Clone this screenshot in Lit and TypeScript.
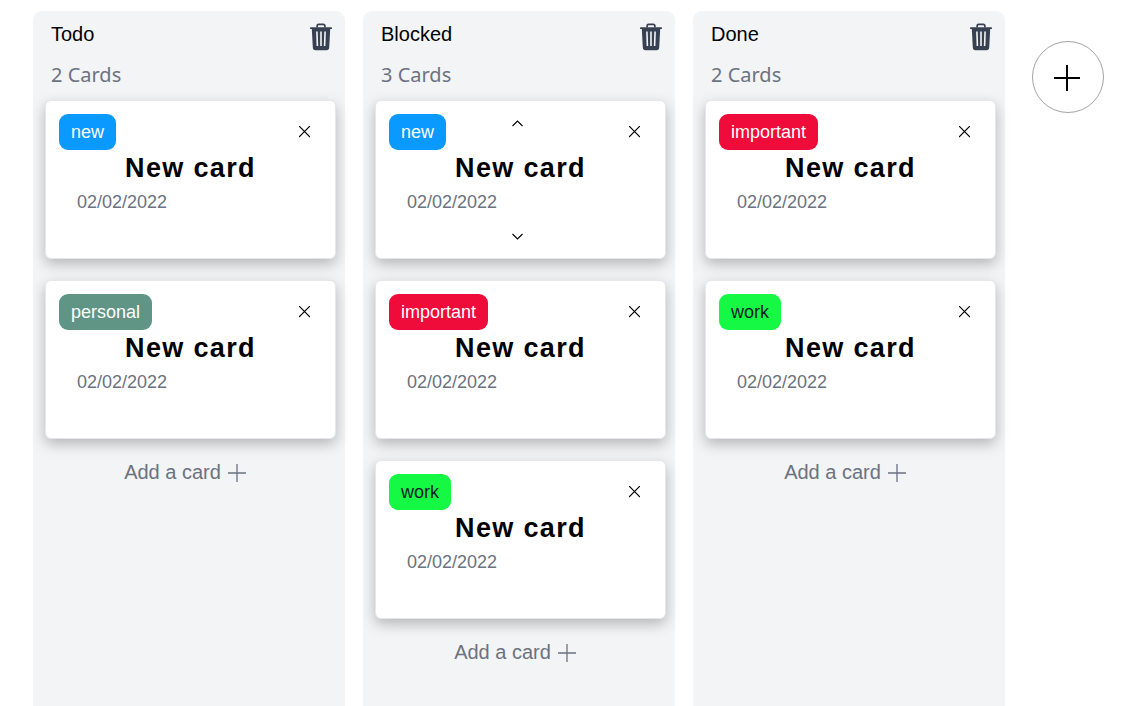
import { LitElement, html, css, svg, nothing } from "lit";
import { customElement, property, state } from "lit/decorators.js";
import { classMap } from "lit/directives/class-map.js";

type Tag = "new" | "personal" | "important" | "work";

interface Card {
  tag: Tag;
  title: string;
  date: string;
  movable?: boolean;
}

interface Column {
  name: string;
  cards: Card[];
}

const reset = css`
  *,
  *::before,
  *::after {
    box-sizing: border-box;
  }
  button {
    display: flex;
    align-items: center;
    justify-content: center;
    margin: 0;
    padding: 0;
    border: 0;
    background: none;
    color: inherit;
    font: inherit;
    cursor: pointer;
  }
  svg {
    display: block;
    flex: none;
    fill: none;
    stroke: currentColor;
  }
  h2,
  h3,
  p {
    margin: 0;
  }
`;

const trashIcon = html`<svg width="22" height="28" viewBox="0 0 22 28" aria-hidden="true">
  <path
    d="M7.100 4.600V2.900a1.500 1.500 0 0 1 1.500-1.500h4.800a1.500 1.500 0 0 1 1.500 1.500v1.700"
    stroke-width="1.700"
  />
  <path
    d="M.6 4.300h20.800c.4 0 .6.3.6.6v.6c0 .4-.3.6-.6.6h-1.200l-1 18.500a2.700 2.700 0 0 1-2.700 2.600H5.500a2.700 2.700 0 0 1-2.700-2.600L1.800 6.100H.6a.6.6 0 0 1-.6-.6v-.6c0-.4.3-.6.6-.6z"
    fill="currentColor"
    stroke="none"
  />
  <path class="slot" d="M6.900 8.500l.500 14.500M11 8.500V23M15.100 8.500L14.600 23" stroke-width="1.600" />
</svg>`;

const closeIcon = html`<svg width="11" height="12" viewBox="0 0 11 12" aria-hidden="true">
  <path d="M0 0l11 11M11 0L0 11" stroke-width="1.200" />
</svg>`;

const chevron = (d: string) => html`<svg width="13" height="7" viewBox="0 0 13 7" aria-hidden="true">
  ${svg`<path d=${d} stroke-width="1.1" />`}
</svg>`;

@customElement("task-card")
export class TaskCard extends LitElement {
  @property({ attribute: false }) card!: Card;

  static styles = [
    reset,
    css`
      :host {
        display: block;
      }
      .card {
        padding: 13px 13px 4px;
        border: 1px solid #e5e7eb;
        border-radius: 6px;
        background: #fff;
        box-shadow: 0 5px 14px rgba(0, 0, 0, 0.26);
      }
      .top {
        display: grid;
        grid-template-columns: 1fr auto 1fr;
        height: 36px;
        padding-right: 6px;
      }
      .tag {
        justify-self: start;
        padding: 0 12px;
        border-radius: 9px;
        font-size: 18px;
        line-height: 36px;
        color: #fff;
      }
      .new {
        background: #0a99ff;
      }
      .personal {
        background: #609586;
      }
      .important {
        background: #ef0b3a;
      }
      .work {
        background: #15f945;
        color: #111827;
      }
      .move {
        grid-column: 2;
        width: 21px;
        height: 19px;
      }
      .close {
        grid-column: 3;
        justify-self: end;
        width: 23px;
        height: 36px;
      }
      .title {
        font-size: 27px;
        font-weight: 700;
        line-height: 36px;
        letter-spacing: 0.05em;
        text-align: center;
      }
      .date {
        padding-left: 18px;
        font-size: 18px;
        line-height: 32px;
        color: #6b7280;
      }
      .bottom {
        display: flex;
        align-items: center;
        justify-content: center;
        height: 36px;
        padding-right: 6px;
      }
    `,
  ];

  render() {
    const { tag, title, date, movable } = this.card;
    return html`
      <article class="card">
        <div class="top">
          <span class=${classMap({ tag: true, [tag]: true })}>${tag}</span>
          ${movable
            ? html`<button class="move" aria-label="Move up">${chevron("M1.5 6l5-5 5 5")}</button>`
            : nothing}
          <button class="close" aria-label="Remove card">${closeIcon}</button>
        </div>
        <h3 class="title">${title}</h3>
        <p class="date">${date}</p>
        <div class="bottom">
          ${movable
            ? html`<button class="move" aria-label="Move down">${chevron("M1.5 1l5 5 5-5")}</button>`
            : nothing}
        </div>
      </article>
    `;
  }
}

@customElement("board-column")
export class BoardColumn extends LitElement {
  @property({ attribute: false }) column!: Column;

  static styles = [
    reset,
    css`
      :host {
        display: block;
        flex: 0 0 312px;
      }
      .column {
        height: 100%;
        padding: 9px 9px 24px 12px;
        border-radius: 9px 9px 0 0;
        background: #f3f4f6;
      }
      .head {
        display: flex;
        justify-content: space-between;
        height: 34px;
        padding: 0 4px 0 6px;
      }
      .name {
        font-size: 20px;
        font-weight: 400;
        line-height: 28px;
      }
      .trash {
        color: #374151;
      }
      .slot {
        stroke: #f3f4f6;
      }
      .count {
        padding: 0 6px 4px;
        font-family: "Noto Sans", sans-serif;
        font-size: 20px;
        line-height: 42px;
        color: #6b7280;
      }
      .cards {
        display: flex;
        flex-direction: column;
        gap: 21px;
      }
      .add {
        gap: 7px;
        height: 24px;
        padding-right: 11px;
        font-size: 20px;
        line-height: 24px;
        color: #6b7280;
      }
    `,
  ];

  render() {
    const { name, cards } = this.column;
    return html`
      <section class="column">
        <header class="head">
          <h2 class="name">${name}</h2>
          <button class="trash" aria-label="Delete column">${trashIcon}</button>
        </header>
        <p class="count">${cards.length} Cards</p>
        <div class="cards">
          ${cards.map((card) => html`<task-card .card=${card}></task-card>`)}
          <button class="add">
            Add a card
            <svg width="18" height="20" viewBox="0 0 18 20" aria-hidden="true">
              <path d="M9 2v18M0 11h18" stroke-width="1.3" />
            </svg>
          </button>
        </div>
      </section>
    `;
  }
}

@customElement("app-root")
export class AppRoot extends LitElement {
  @state() private columns: Column[] = [
    {
      name: "Todo",
      cards: [
        { tag: "new", title: "New card", date: "02/02/2022" },
        { tag: "personal", title: "New card", date: "02/02/2022" },
      ],
    },
    {
      name: "Blocked",
      cards: [
        { tag: "new", title: "New card", date: "02/02/2022", movable: true },
        { tag: "important", title: "New card", date: "02/02/2022" },
        { tag: "work", title: "New card", date: "02/02/2022" },
      ],
    },
    {
      name: "Done",
      cards: [
        { tag: "important", title: "New card", date: "02/02/2022" },
        { tag: "work", title: "New card", date: "02/02/2022" },
      ],
    },
  ];

  static styles = [
    reset,
    css`
      :host {
        display: block;
        background: #fff;
        color: #000;
        font-family: "Liberation Sans", Arial, sans-serif;
      }
      .board {
        display: flex;
        gap: 18px;
        min-height: 100vh;
        padding: 11px 18px 0 33px;
      }
      .new-column {
        flex: none;
        width: 72px;
        height: 72px;
        margin: 30px 9px 0;
        border: 1px solid #a3a3a3;
        border-radius: 50%;
      }
    `,
  ];

  render() {
    return html`
      <main class="board">
        ${this.columns.map((column) => html`<board-column .column=${column}></board-column>`)}
        <button class="new-column" aria-label="Add column">
          <svg width="28" height="28" viewBox="0 0 28 28" aria-hidden="true">
            <path d="M13 2v26M0 15h26" stroke-width="2" />
          </svg>
        </button>
      </main>
    `;
  }
}
